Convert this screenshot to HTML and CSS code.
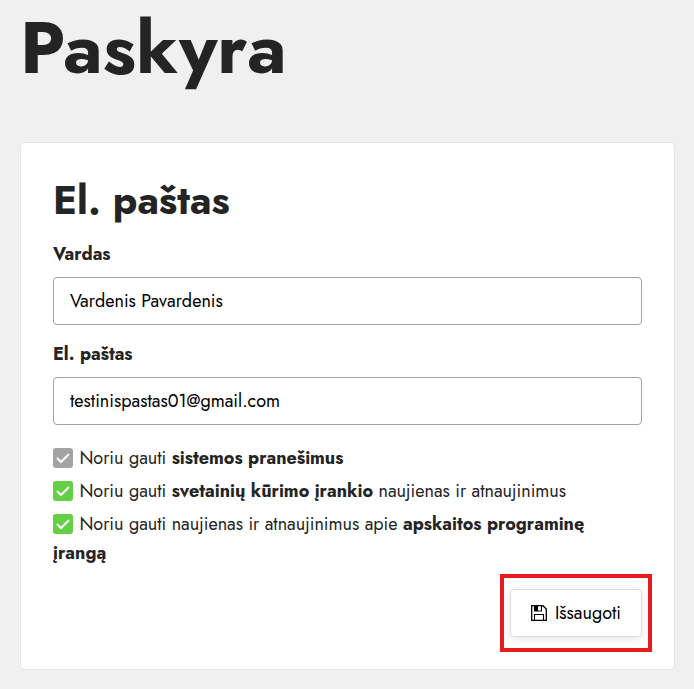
FILE: index.html
```html
<!DOCTYPE html>
<html lang="lt">
<head>
    <meta charset="UTF-8">
    <meta name="viewport" content="width=device-width, initial-scale=1">
    <title>Paskyra</title>
    <link rel="stylesheet" href="styles.css">
</head>
<body>
    <h1>Paskyra</h1>

    <form class="card">
        <h2>El. paštas</h2>

        <label class="field-label" for="name">Vardas</label>
        <input class="field" type="text" id="name" value="Vardenis Pavardenis">

        <label class="field-label" for="email">El. paštas</label>
        <input class="field" type="email" id="email" value="testinispastas01@gmail.com">

        <div class="options">
            <div class="option">
                <input type="checkbox" id="system" checked disabled>
                <label for="system">Noriu gauti <b>sistemos pranešimus</b></label>
            </div>
            <div class="option">
                <input type="checkbox" id="site" checked>
                <label for="site">Noriu gauti <b>svetainių kūrimo įrankio</b> naujienas ir atnaujinimus</label>
            </div>
            <div class="option">
                <input type="checkbox" id="accounting" checked>
                <label for="accounting">Noriu gauti naujienas ir atnaujinimus apie <b>apskaitos programinę įrangą</b></label>
            </div>
        </div>

        <div class="actions">
            <div class="highlight">
                <button class="save-button" type="button">
                    <svg width="16" height="16" viewBox="0 0 16 16" fill="none" stroke="#000" aria-hidden="true">
                        <path d="M.7.7h11.300l3.300 3.300v11.300H.7z" stroke-width="1.300"/>
                        <path d="M3.500 1v5h7V1M3.500 15V9.500h9V15" stroke-width="1.100"/>
                        <path d="M3.500 1H7v5H3.500z" fill="#000" stroke="none"/>
                    </svg>
                    Išsaugoti
                </button>
            </div>
        </div>
    </form>
</body>
</html>
```
FILE: styles.css
```css
* {
    box-sizing: border-box;
}
body {
    margin: 0;
    padding: 0 19px 20px 20px;
    background: #f0f0f0;
    color: #242424;
    font-family: Jost, Lato, "Open Sans", sans-serif;
    font-size: 18px;
    line-height: 29px;
}
h1 {
    margin: 0 0 46px;
    font-size: 73px;
    line-height: 96px;
}
h2 {
    margin: 0 0 15px;
    font-size: 40px;
    line-height: 50px;
}
.card {
    padding: 32px;
    background: #fff;
    border: 1px solid #e6e6e6;
    border-radius: 5px;
}
.field-label {
    display: block;
    margin-bottom: 8px;
    font-weight: bold;
}
.field {
    display: block;
    width: 100%;
    height: 48px;
    margin-bottom: 15px;
    padding: 0 16px;
    background: #fff;
    border: 1px solid #a0a0a0;
    border-radius: 4px;
    color: #000;
    font: inherit;
}
.options {
    margin-top: 19px;
}
.option {
    margin-bottom: 4px;
}
.option input {
    appearance: none;
    width: 20px;
    height: 20px;
    margin: 0 1px 4px 0;
    border-radius: 3px;
    vertical-align: middle;
    background: #62cf45 url("data:image/svg+xml,%3Csvg xmlns='http://www.w3.org/2000/svg' viewBox='0 0 20 20'%3E%3Cpath d='M4 10l4 4 8-8' fill='none' stroke='white' stroke-width='2'/%3E%3C/svg%3E");
}
.option input:disabled {
    background-color: #a3a3a3;
}
.actions {
    display: flex;
    justify-content: flex-end;
    margin-top: 21px;
}
.highlight {
    position: relative;
}
/* red frame around the save button */
.highlight::after {
    content: "";
    position: absolute;
    inset: -15px -10px;
    border: 4px solid #e81c1c;
    pointer-events: none;
}
.save-button {
    display: flex;
    align-items: center;
    gap: 8px;
    height: 48px;
    padding: 0 20px;
    background: #fff;
    border: 1px solid #dcdcdc;
    border-radius: 4px;
    box-shadow: 0 2px 8px rgba(0, 0, 0, 0.1);
    color: #000;
    font: inherit;
}
```
